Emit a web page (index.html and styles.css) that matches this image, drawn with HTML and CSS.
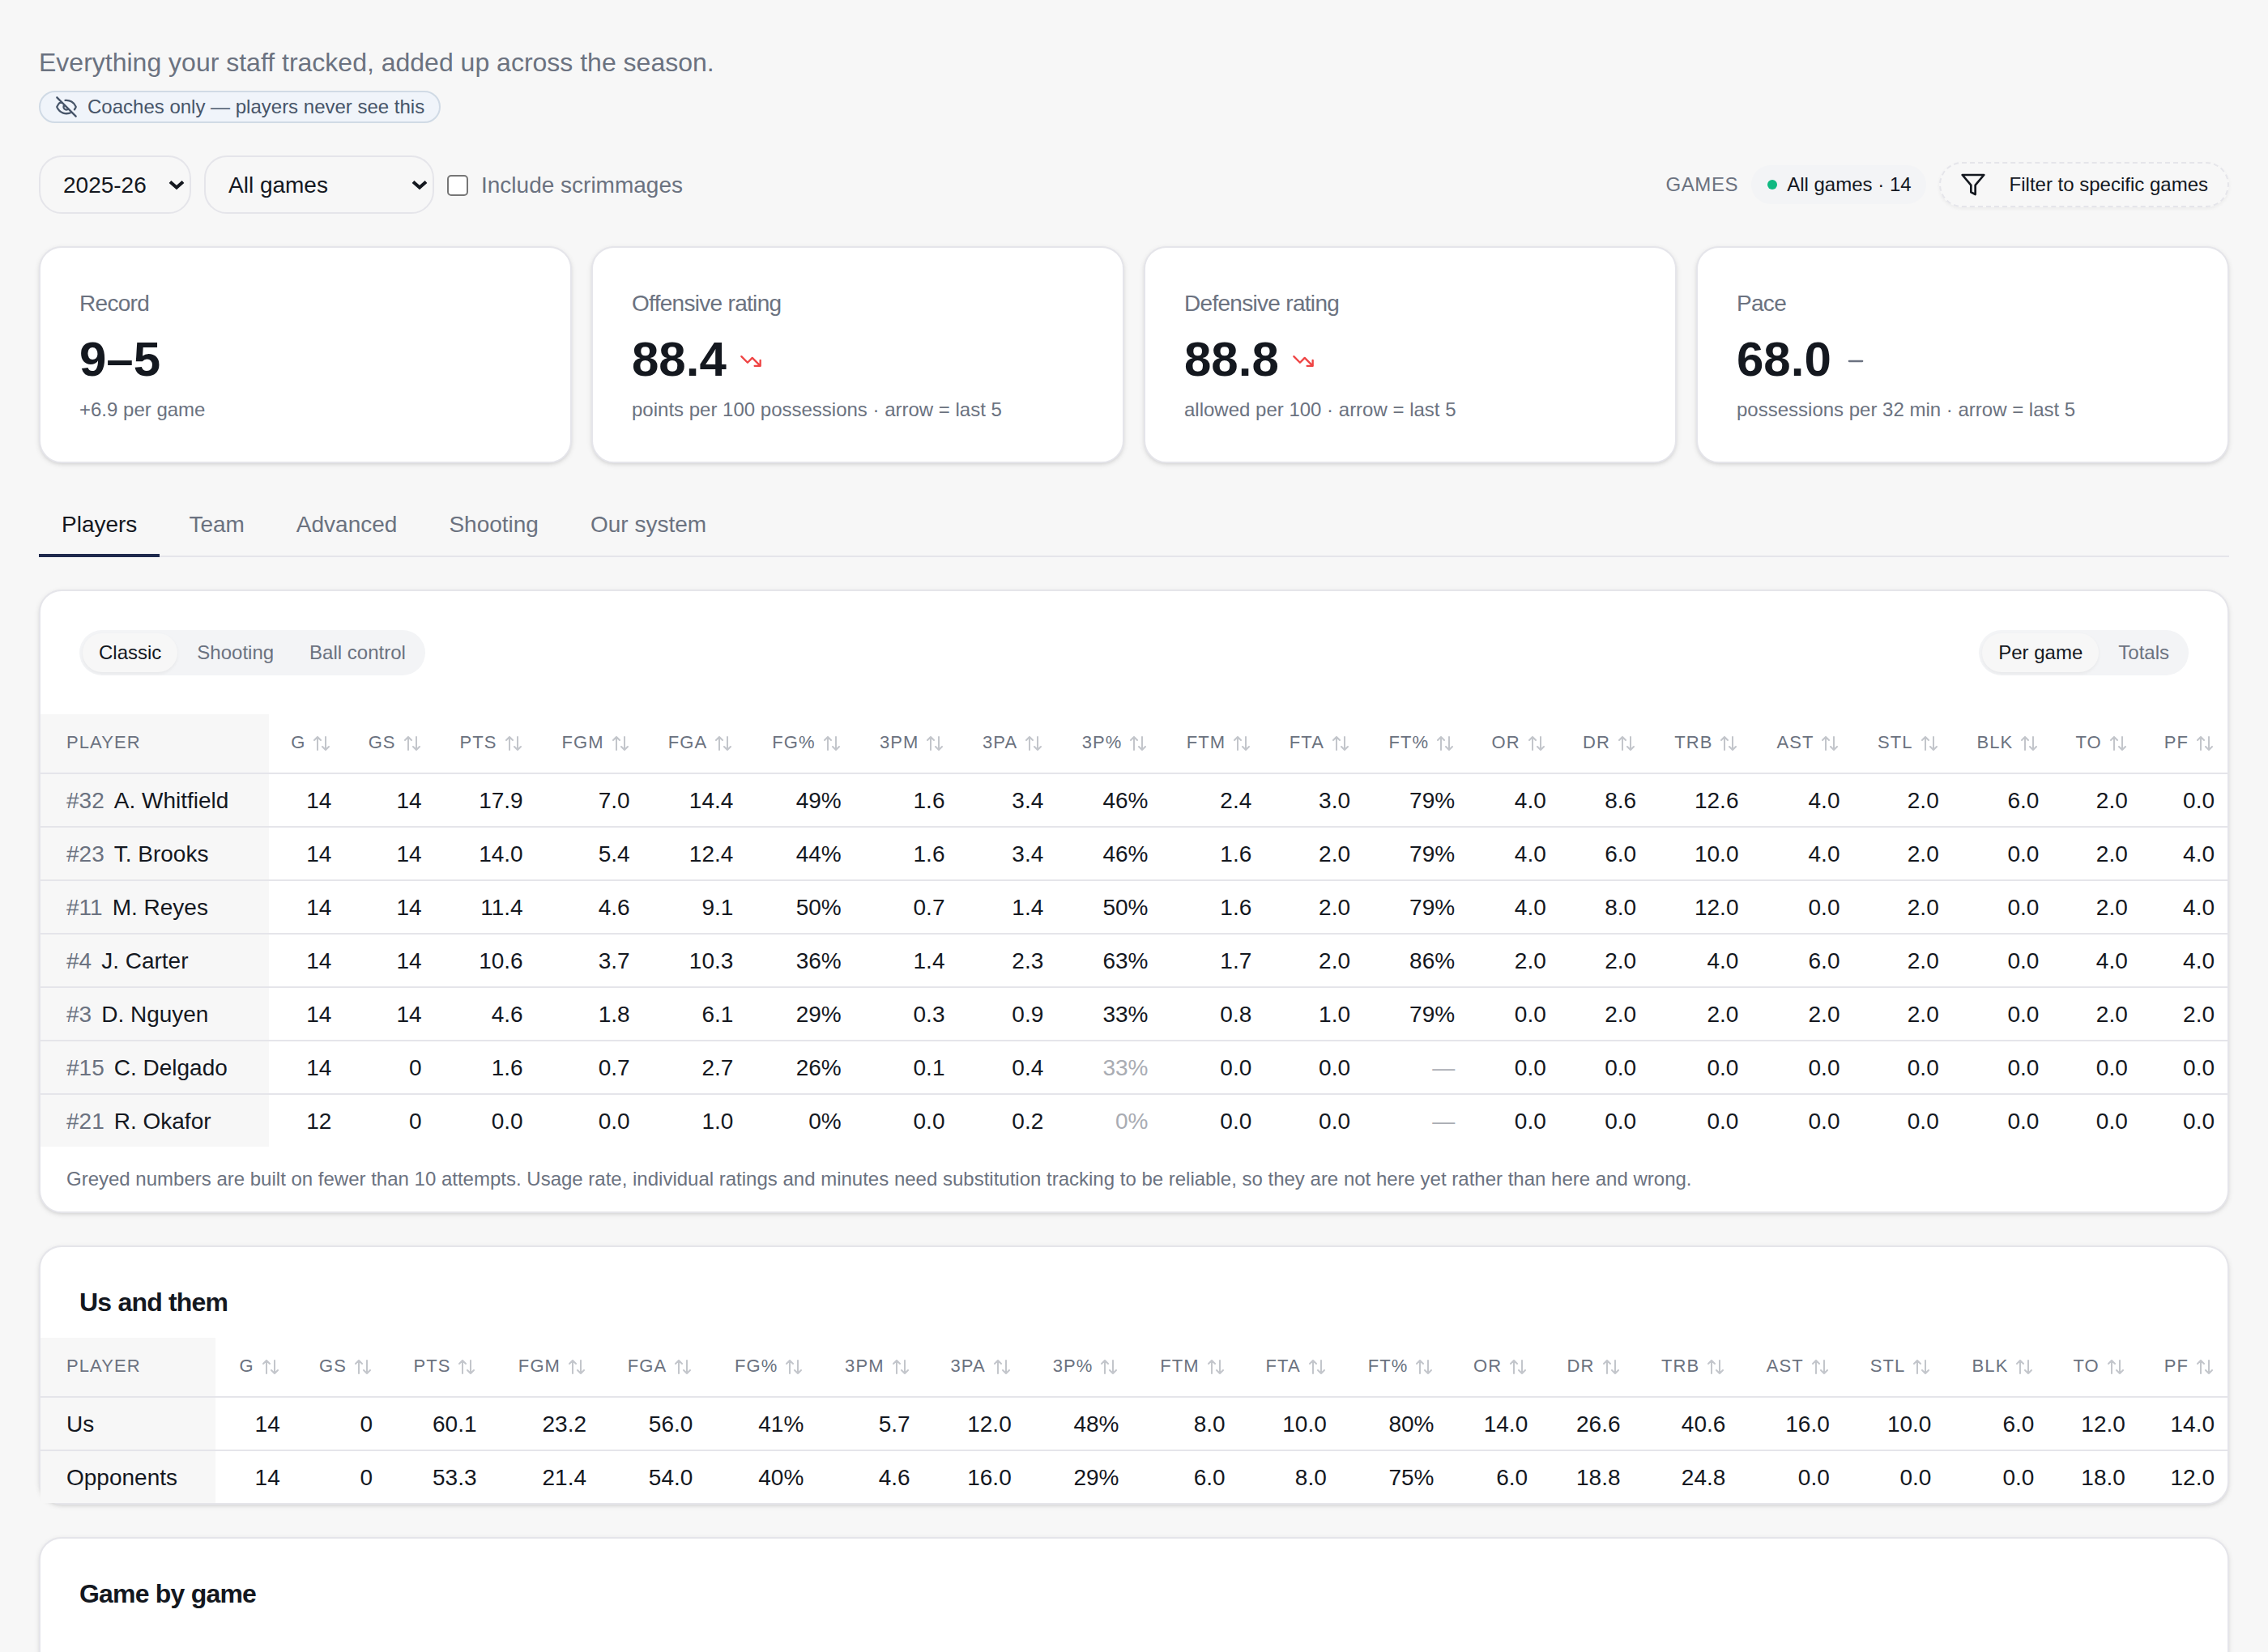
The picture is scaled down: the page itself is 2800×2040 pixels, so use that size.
FILE: index.html
```
<!DOCTYPE html>
<html lang="en">
<head>
    <meta charset="UTF-8">
    <meta name="viewport" content="width=device-width, initial-scale=1.0">
    <title>Season Stats</title>
    <link rel="stylesheet" href="styles.css">
</head>
<body>
    <svg class="sprite" width="0" height="0">
        <symbol id="sort" viewBox="0 0 24 24">
            <path d="m21 16-4 4-4-4M17 20V4M3 8l4-4 4 4M7 4v16"/>
        </symbol>
        <symbol id="trend-down" viewBox="0 0 24 24">
            <path d="M22 17 13.5 8.5l-5 5L2 7M16 17h6v-6"/>
        </symbol>
        <symbol id="chevron" viewBox="0 0 20 14">
            <path d="m2 2.4 8 7.2 8-7.2"/>
        </symbol>
    </svg>

    <div class="page">
        <p class="intro">Everything your staff tracked, added up across the season.</p>
        <div class="private-badge">
            <svg class="icon" viewBox="0 0 24 24">
                <path d="M10.733 5.076a10.744 10.744 0 0 1 11.205 6.575 1 1 0 0 1 0 .696 10.747 10.747 0 0 1-1.444 2.49M14.084 14.158a3 3 0 0 1-4.242-4.242M17.479 17.499a10.75 10.75 0 0 1-15.417-5.151 1 1 0 0 1 0-.696 10.75 10.75 0 0 1 4.446-5.143M2 2l20 20"/>
            </svg>
            <span>Coaches only — players never see this</span>
        </div>

        <div class="toolbar">
            <div class="select season">2025-26<svg class="chevron"><use href="#chevron"/></svg></div>
            <div class="select scope">All games<svg class="chevron"><use href="#chevron"/></svg></div>
            <label class="check"><span class="box"></span>Include scrimmages</label>
            <div class="games">
                <span class="games-label">GAMES</span>
                <span class="games-pill"><i class="dot"></i>All games · 14</span>
                <button class="filter-btn">
                    <svg class="icon" viewBox="0 0 24 24"><path d="M22 3H2l8 9.46V19l4 2v-8.54z"/></svg>
                    Filter to specific games
                </button>
            </div>
        </div>

        <div class="stats">
            <div class="card stat">
                <div class="stat-label">Record</div>
                <div class="stat-value">9–5</div>
                <div class="stat-sub">+6.9 per game</div>
            </div>
            <div class="card stat">
                <div class="stat-label">Offensive rating</div>
                <div class="stat-value">88.4<svg class="icon down"><use href="#trend-down"/></svg></div>
                <div class="stat-sub">points per 100 possessions · arrow = last 5</div>
            </div>
            <div class="card stat">
                <div class="stat-label">Defensive rating</div>
                <div class="stat-value">88.8<svg class="icon down"><use href="#trend-down"/></svg></div>
                <div class="stat-sub">allowed per 100 · arrow = last 5</div>
            </div>
            <div class="card stat">
                <div class="stat-label">Pace</div>
                <div class="stat-value">68.0<svg class="icon flat" viewBox="0 0 24 24"><path d="M5 12h14"/></svg></div>
                <div class="stat-sub">possessions per 32 min · arrow = last 5</div>
            </div>
        </div>

        <div class="tabs">
            <div class="tab active">Players</div>
            <div class="tab">Team</div>
            <div class="tab">Advanced</div>
            <div class="tab">Shooting</div>
            <div class="tab">Our system</div>
        </div>

        <div class="card">
            <div class="card-bar">
                <div class="segmented">
                    <button class="active">Classic</button>
                    <button>Shooting</button>
                    <button>Ball control</button>
                </div>
                <div class="segmented">
                    <button class="active">Per game</button>
                    <button>Totals</button>
                </div>
            </div>
            <table id="players"></table>
            <p class="note">Greyed numbers are built on fewer than 10 attempts. Usage rate, individual ratings and minutes need substitution tracking to be reliable, so they are not here yet rather than here and wrong.</p>
        </div>

        <div class="card">
            <h2>Us and them</h2>
            <table id="teams"></table>
        </div>

        <div class="card games-card">
            <h2>Game by game</h2>
        </div>
    </div>

    <script src="script.js"></script>
</body>
</html>
```
FILE: styles.css
```
* {
    box-sizing: border-box;
}
body {
    margin: 0;
    background-color: #f7f7f7;
    color: #14181f;
    font-family: "Liberation Sans", Arial, sans-serif;
    font-size: 28px;
    line-height: 40px;
}
.sprite {
    position: absolute;
}
svg {
    fill: none;
    stroke: currentColor;
    stroke-width: 2;
    stroke-linecap: round;
    stroke-linejoin: round;
    flex-shrink: 0;
}
button {
    font: inherit;
    color: inherit;
    border: none;
    background: none;
}
.icon {
    width: 28px;
    height: 28px;
}
.page {
    height: 2040px;
    padding: 53px 48px 0;
    overflow: hidden;
}
.intro {
    margin: 0 0 11px;
    font-size: 32px;
    line-height: 48px;
    color: #6b7280;
}
.private-badge {
    display: flex;
    align-items: center;
    gap: 12px;
    width: fit-content;
    height: 40px;
    padding: 0 18px;
    border: 2px solid #d0dae5;
    border-radius: 20px;
    background-color: #f0f4fa;
    color: #475569;
    font-size: 24px;
}

/* filters */
.toolbar {
    display: flex;
    align-items: center;
    gap: 16px;
    height: 72px;
    margin-top: 40px;
}
.select {
    display: flex;
    align-items: center;
    justify-content: space-between;
    height: 72px;
    padding: 2px 6px 0 28px;
    border: 2px solid #e5e5ea;
    border-radius: 28px;
}
.season {
    width: 188px;
}
.scope {
    width: 284px;
}
.chevron {
    width: 20px;
    height: 14px;
    stroke-width: 4;
    stroke-linecap: butt;
    stroke-linejoin: miter;
}
.check {
    display: flex;
    align-items: center;
    gap: 16px;
    padding-top: 2px;
    color: #6b7280;
}
.box {
    width: 26px;
    height: 26px;
    margin-top: -1px;
    border: 2px solid #767676;
    border-radius: 5px;
    background-color: #fff;
}
.games {
    display: flex;
    align-items: center;
    gap: 16px;
    margin-left: auto;
    font-size: 24px;
}
.games-label {
    color: #6b7280;
    letter-spacing: 0.6px;
}
.games-pill {
    display: flex;
    align-items: center;
    gap: 12px;
    height: 48px;
    padding: 0 18px 0 20px;
    border-radius: 24px;
    background-color: #f3f4f6;
}
.dot {
    width: 12px;
    height: 12px;
    border-radius: 50%;
    background-color: #10b981;
}
.filter-btn {
    display: flex;
    align-items: center;
    gap: 29px;
    height: 56px;
    padding: 0 24px;
    border: 2px dashed #e5e5ea;
    border-radius: 28px;
    box-shadow: 0 2px 4px rgba(0, 0, 0, 0.05);
}
.filter-btn .icon {
    width: 32px;
    height: 32px;
}

/* cards */
.card {
    margin-bottom: 40px;
    border: 2px solid #e5e5ea;
    border-radius: 28px;
    background-color: #fff;
    box-shadow: 0 2px 6px rgba(0, 0, 0, 0.1), 0 2px 4px -2px rgba(0, 0, 0, 0.1);
}
.stats {
    display: grid;
    grid-template-columns: repeat(4, 1fr);
    gap: 24px;
    margin-top: 40px;
}
.stat {
    height: 268px;
    margin: 0;
    padding: 48px;
}
.stat-label {
    color: #6b7280;
    line-height: 42px;
    letter-spacing: -0.7px;
}
.stat-value {
    display: flex;
    align-items: center;
    gap: 16px;
    margin-top: 12px;
    font-size: 60px;
    font-weight: bold;
    line-height: 72px;
}
.stat-value .icon {
    margin-top: 4px;
}
.down {
    color: #ef4444;
}
.flat {
    color: #6b7280;
}
.stat-sub {
    margin-top: 10px;
    color: #6b7280;
    font-size: 24px;
    line-height: 32px;
}
.card h2 {
    margin: 0;
    padding: 48px 48px 24px;
    font-size: 32px;
    line-height: 40px;
    letter-spacing: -0.8px;
}
.games-card {
    height: 300px;
}

/* tabs */
.tabs {
    display: flex;
    gap: 8px;
    height: 76px;
    margin: 40px 0;
    border-bottom: 2px solid #e5e5ea;
}
.tab {
    height: 76px;
    padding: 16px 28px 0;
    color: #6b7280;
}
.tab.active {
    color: #14181f;
    border-bottom: 4px solid #1f2a4d;
}

.card-bar {
    display: flex;
    justify-content: space-between;
    padding: 48px;
}
.segmented {
    display: flex;
    gap: 4px;
    padding: 4px;
    border-radius: 28px;
    background-color: #f3f4f6;
}
.segmented button {
    height: 48px;
    padding: 0 20px;
    border-radius: 24px;
    color: #6b7280;
    font-size: 24px;
}
.segmented .active {
    background-color: #f7f7f7;
    color: #14181f;
    box-shadow: 0 2px 4px rgba(0, 0, 0, 0.05);
}

/* stat tables */
table {
    width: 100%;
    border-spacing: 0;
}
th, td {
    padding: 13px 16px 11px;
    border-bottom: 2px solid #e5e5ea;
    text-align: right;
    white-space: nowrap;
}
th {
    height: 74px;
    padding: 0 16px 2px;
    color: #6b7280;
    font-size: 22px;
    font-weight: normal;
    letter-spacing: 1.1px;
}
th:first-child, td:first-child {
    padding-left: 32px;
    background-color: #f7f7f7;
    text-align: left;
}
tr:last-child td {
    border-bottom: none;
}
.sortable {
    display: inline-flex;
    align-items: center;
    gap: 8px;
}
.sortable svg {
    width: 24px;
    height: 24px;
    margin-top: 2px;
    opacity: 0.4;
}
.num {
    margin-right: 12px;
    color: #6b7280;
}
.low {
    color: #a9acb3;
}
.note {
    margin: 0;
    padding: 24px 32px;
    color: #6b7280;
    font-size: 24px;
    line-height: 32px;
}
```
FILE: script.js
```
const columns = ['G', 'GS', 'PTS', 'FGM', 'FGA', 'FG%', '3PM', '3PA', '3P%', 'FTM', 'FTA', 'FT%', 'OR', 'DR', 'TRB', 'AST', 'STL', 'BLK', 'TO', 'PF'];

// a trailing * marks a value built on too few attempts
const players = [
    ['#32', 'A. Whitfield', '14 14 17.9 7.0 14.4 49% 1.6 3.4 46% 2.4 3.0 79% 4.0 8.6 12.6 4.0 2.0 6.0 2.0 0.0'],
    ['#23', 'T. Brooks', '14 14 14.0 5.4 12.4 44% 1.6 3.4 46% 1.6 2.0 79% 4.0 6.0 10.0 4.0 2.0 0.0 2.0 4.0'],
    ['#11', 'M. Reyes', '14 14 11.4 4.6 9.1 50% 0.7 1.4 50% 1.6 2.0 79% 4.0 8.0 12.0 0.0 2.0 0.0 2.0 4.0'],
    ['#4', 'J. Carter', '14 14 10.6 3.7 10.3 36% 1.4 2.3 63% 1.7 2.0 86% 2.0 2.0 4.0 6.0 2.0 0.0 4.0 4.0'],
    ['#3', 'D. Nguyen', '14 14 4.6 1.8 6.1 29% 0.3 0.9 33% 0.8 1.0 79% 0.0 2.0 2.0 2.0 2.0 0.0 2.0 2.0'],
    ['#15', 'C. Delgado', '14 0 1.6 0.7 2.7 26% 0.1 0.4 33%* 0.0 0.0 —* 0.0 0.0 0.0 0.0 0.0 0.0 0.0 0.0'],
    ['#21', 'R. Okafor', '12 0 0.0 0.0 1.0 0% 0.0 0.2 0%* 0.0 0.0 —* 0.0 0.0 0.0 0.0 0.0 0.0 0.0 0.0']
];
const teams = [
    ['', 'Us', '14 0 60.1 23.2 56.0 41% 5.7 12.0 48% 8.0 10.0 80% 14.0 26.6 40.6 16.0 10.0 6.0 12.0 14.0'],
    ['', 'Opponents', '14 0 53.3 21.4 54.0 40% 4.6 16.0 29% 6.0 8.0 75% 6.0 18.8 24.8 0.0 0.0 0.0 18.0 12.0']
];

function renderTable(id, rows) {
    let html = '<thead><tr><th>PLAYER</th>';
    columns.forEach(col => {
        html += `<th><span class="sortable">${col}<svg><use href="#sort"/></svg></span></th>`;
    });
    html += '</tr></thead><tbody>';
    rows.forEach(([num, name, values]) => {
        html += `<tr><td>${num ? `<span class="num">${num}</span>` : ''}${name}</td>`;
        values.split(' ').forEach(value => {
            const low = value.endsWith('*');
            html += `<td${low ? ' class="low"' : ''}>${value.replace('*', '')}</td>`;
        });
        html += '</tr>';
    });
    document.getElementById(id).innerHTML = html + '</tbody>';
}

renderTable('players', players);
renderTable('teams', teams);
```
